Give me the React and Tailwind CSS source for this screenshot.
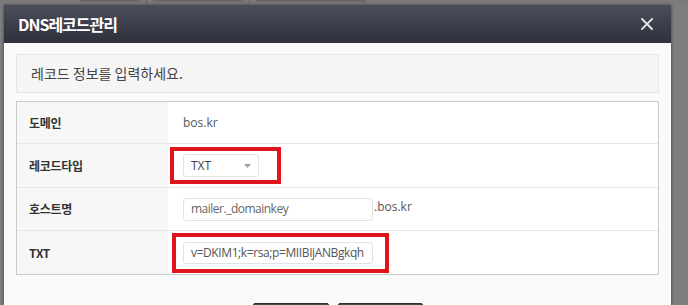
import React from 'react'

const kr = { fontFamily: '"Noto Sans CJK KR", "Noto Sans", sans-serif' }
const latin = { fontFamily: '"Open Sans", "Noto Sans CJK KR", sans-serif' }

function CloseIcon() {
	return (
		<svg width="14" height="14" viewBox="0 0 14 14" className="block">
			<path d="M2 2 L12 12 M12 2 L2 12" stroke="#e6e6e8" strokeWidth="1.8" strokeLinecap="square" />
		</svg>
	)
}

function Row({label, height, last, children}) {
	return (
		<div className={'flex ' + (last ? '' : 'border-b border-[#e6e6e6]')} style={{height}}>
			<div className="w-[151px] shrink-0 bg-[#f7f7f7] flex items-center pl-[12px] text-[12px] font-bold text-[#333] tracking-[-0.3px]" style={kr}>
				{label}
			</div>
			<div className="flex-1 bg-white flex items-center pl-[15px]">
				{children}
			</div>
		</div>
	)
}

// red annotation box drawn over the field
function Marked({children, box}) {
	return (
		<div className="relative">
			{children}
			<div className={'absolute border-[4px] border-[#e0141c] pointer-events-none ' + box} />
		</div>
	)
}

export default function App() {
	return (
		<div className="w-[688px] h-[305px] bg-[#7e7e7e] overflow-hidden relative">
			<div className="h-[5px] bg-[#7b7b7b] flex items-start gap-[6px] pl-[80px]">
				<div className="w-[60px] h-[2px] bg-[#6a6a6a]" />
				<div className="w-[1px] h-[5px] bg-[#5e5e5e]" />
				<div className="w-[90px] h-[2px] bg-[#6a6a6a]" />
				<div className="w-[1px] h-[5px] bg-[#5e5e5e]" />
				<div className="w-[110px] h-[2px] bg-[#6a6a6a]" />
			</div>

			<div className="ml-[4px] w-[667px] shadow-[0_0_3px_rgba(0,0,0,0.55)]">
				<div className="h-[38px] bg-gradient-to-b from-[#4b4e5c] to-[#2e313b] flex items-center justify-between pl-[14px] pr-[17px]">
					<h2 className="text-[16px] font-bold text-white tracking-[-1px]" style={kr}>DNS레코드관리</h2>
					<CloseIcon />
				</div>

				<div className="bg-[#fafafa] px-[12px] pt-[11px] h-[300px]">
					<div className="h-[39px] bg-[#f5f5f5] border border-[#e6e6e6] flex items-center pl-[14px] text-[14px] text-[#444]" style={kr}>
						레코드 정보를 입력하세요.
					</div>

					<div className="mt-[8px] border border-[#c9c9c9] bg-white">
						<Row label="도메인" height={42}>
							<span className="text-[12px] text-[#555]" style={latin}>bos.kr</span>
						</Row>
						<Row label="레코드타입" height={44}>
							<Marked box="left-[-13px] top-[-7px] w-[111px] h-[37px]">
								<div className="w-[76px] h-[23px] bg-white border border-[#e2e2e2] rounded-[3px] flex items-center justify-between pl-[7px] pr-[7px]">
									<span className="text-[12px] text-[#444]" style={latin}>TXT</span>
									<svg width="7" height="4" viewBox="0 0 7 4"><path d="M0 0 L7 0 L3.5 4 Z" fill="#a0a0a0" /></svg>
								</div>
							</Marked>
						</Row>
						<Row label="호스트명" height={43}>
							<div className="w-[190px] h-[23px] bg-white border border-[#e2e2e2] rounded-[3px] flex items-center pl-[7px] text-[12px] text-[#666] tracking-[-0.5px]" style={latin}>
								mailer._domainkey
							</div>
							<span className="ml-[1px] mb-[4px] text-[12px] text-[#555]" style={latin}>.bos.kr</span>
						</Row>
						<Row label="TXT" height={43} last>
							<Marked box="left-[-11px] top-[-9px] w-[217px] h-[40px]">
								<div className="w-[190px] h-[22px] bg-white border border-[#e2e2e2] rounded-[3px] flex items-center pl-[7px] text-[12px] text-[#555] tracking-[-0.4px] overflow-hidden whitespace-nowrap" style={latin}>
									v=DKIM1;k=rsa;p=MIIBIjANBgkqh
								</div>
							</Marked>
						</Row>
					</div>

					<div className="mt-[28px] flex justify-center gap-[9px]">
						<button className="w-[76px] h-[30px] bg-[#4a4a4a] border border-[#2f2f2f] rounded-[2px]" />
						<button className="w-[85px] h-[30px] bg-[#4a4a4a] border border-[#2f2f2f] rounded-[2px]" />
					</div>
				</div>
			</div>
		</div>
	)
}
